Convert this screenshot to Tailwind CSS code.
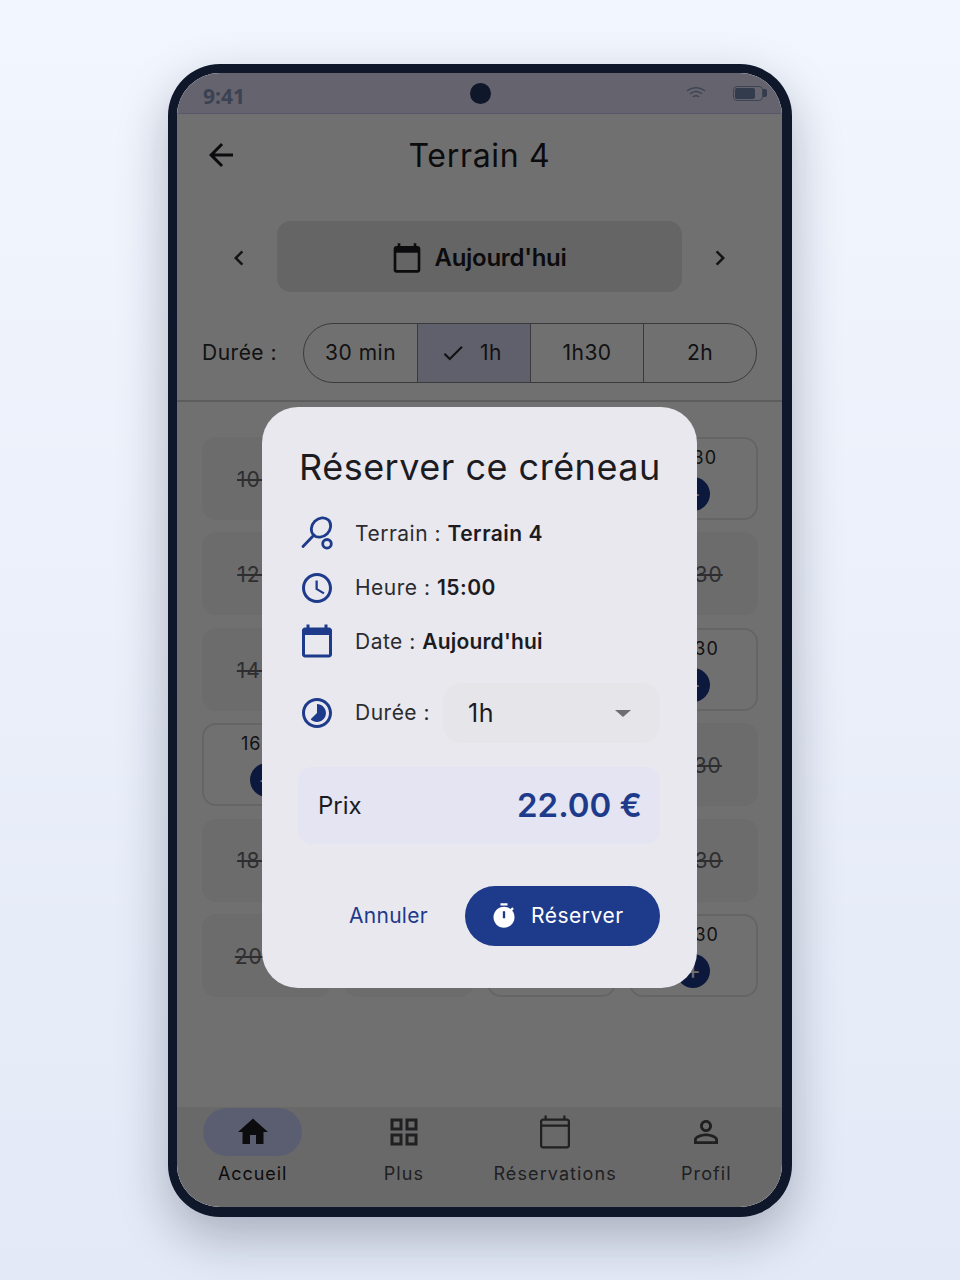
<!DOCTYPE html>
<html lang="fr">
<head>
  <meta charset="UTF-8" />
  <title>Terrain 4</title>
  <script src="https://cdn.jsdelivr.net/npm/@tailwindcss/browser@4"></script>
</head>
<body class="h-[1280px] overflow-hidden bg-gradient-to-b from-[#f2f6fe] to-[#e3e9f6] font-['Inter',sans-serif] text-[#1c1b1f]">

  <div class="pt-[64px]">
    <!-- Phone frame -->
    <div class="relative mx-auto w-[624px] h-[1153px] rounded-[52px] border-[9px] border-r-[10px] border-b-[10px] border-[#0f172a] bg-white overflow-hidden shadow-[0_20px_50px_rgba(15,23,42,0.28)]">
      <div class="flex h-full flex-col">

        <!-- Status bar -->
        <div class="flex h-[41px] shrink-0 items-center justify-between border-b border-[#c8c4f2] bg-[#e6e4fa] pl-[26px] pr-[15px]">
          <span class="pt-[7px] font-['Noto_Sans',sans-serif] text-[21px] font-bold text-[#8496bd]">9:41</span>
          <div class="flex items-center gap-[27px]">
            <svg class="w-[20px] h-[14px] text-[#8a9cc0]" viewBox="0 0 20 14" fill="none" stroke="currentColor" stroke-width="1.5"><path d="M1 5C6 0.500 14 0.500 19 5" /><path d="M4 8C7.500 4.800 12.500 4.800 16 8" /><path d="M7 11C9 9.300 11 9.300 13 11" /></svg>
            <div class="flex items-center">
              <div class="flex h-[15px] w-[30px] items-center rounded-[4px] border-[1.5px] border-[#8a9cc0] p-[1px]"><div class="h-full w-[20px] rounded-[2px] bg-[#7488ae]"></div></div>
              <div class="h-[8px] w-[4px] rounded-r-[2px] bg-[#7488ae]"></div>
            </div>
          </div>
        </div>

        <!-- Header -->
        <div class="relative flex h-[84px] shrink-0 items-center justify-center">
          <svg class="absolute left-[26px] top-[23px] w-[36px] h-[36px]" viewBox="0 0 24 24" fill="currentColor"><path d="M20 11H7.830l5.590-5.590L12 4l-8 8 8 8 1.410-1.410L7.830 13H20v-2z" /></svg>
          <h1 class="text-[32px] font-normal tracking-[0.7px]">Terrain 4</h1>
        </div>

        <!-- Date selector -->
        <div class="relative flex h-[94px] shrink-0 items-center pb-[1px] pl-[100px] pr-[100px] pt-[23px]">
          <svg class="absolute left-[47px] top-[45px] w-[30px] h-[30px] text-[#2e2e30]" viewBox="0 0 24 24" fill="currentColor"><path d="M15.410 7.410L14 6l-6 6 6 6 1.410-1.410L10.830 12z" /></svg>
          <div class="flex h-[71px] w-full items-center justify-center gap-[12px] rounded-[14px] bg-[#e5e5e7] pr-[2px] pt-[3px]">
            <svg class="w-[32px] h-[32px]" viewBox="0 0 24 24" fill="currentColor"><path d="M20 3h-1V1h-2v2H7V1H5v2H4c-1.100 0-2 .9-2 2v16c0 1.100.9 2 2 2h16c1.100 0 2-.9 2-2V5c0-1.100-.9-2-2-2zm0 18H4V8h16v13z" /></svg>
            <span class="text-[24px] font-semibold tracking-[-0.3px]">Aujourd'hui</span>
          </div>
          <svg class="absolute right-[47px] top-[45px] w-[30px] h-[30px] text-[#2e2e30]" viewBox="0 0 24 24" fill="currentColor"><path d="M10 6L8.590 7.410 13.170 12l-4.580 4.590L10 18l6-6z" /></svg>
        </div>

        <!-- Duration selector -->
        <div class="flex h-[110px] shrink-0 items-center gap-[26px] border-b-2 border-[#d3d3d7] px-[25px] pb-[19px] pt-[32px]">
          <span class="pt-[1px] text-[21px] tracking-[0.5px] text-[#2a2a2c]">Durée :</span>
          <div class="grid h-[60px] w-[454px] grid-cols-4 rounded-full border-[1.5px] border-[#85858a] text-[21px] tracking-[0.5px] text-[#2a2a2c]">
            <div class="flex items-center justify-center pt-[1px]">30 min</div>
            <div class="flex items-center justify-center gap-[14px] border-l-[1.5px] border-[#85858a] bg-[#dbdbf9] pr-[6px] pt-[1px]">
              <svg class="w-[26px] h-[26px]" viewBox="0 0 24 24" fill="currentColor"><path d="M9 16.170L4.830 12l-1.420 1.410L9 19 21 7l-1.410-1.410z" /></svg>
              <span>1h</span>
            </div>
            <div class="flex items-center justify-center border-l-[1.5px] border-[#85858a] pt-[1px]">1h30</div>
            <div class="flex items-center justify-center border-l-[1.5px] border-[#85858a] pt-[1px]">2h</div>
          </div>
        </div>

        <!-- Slots -->
        <div class="grid flex-1 grid-cols-4 content-start gap-x-[13px] gap-y-[12.4px] pl-[25px] pr-[24px] pt-[35px] text-[21px] tracking-[1px]">
          <div class="flex h-[83px] items-center justify-center rounded-[14px] bg-[#f5f5f7] pt-[2px] text-[#6a6a6e] line-through">10:00</div>
          <div class="flex h-[83px] items-center justify-center rounded-[14px] bg-[#f5f5f7] pt-[2px] text-[#6a6a6e] line-through">10:30</div>
          <div class="flex h-[83px] items-center justify-center rounded-[14px] bg-[#f5f5f7] pt-[2px] text-[#6a6a6e] line-through">11:00</div>
          <div class="flex h-[83px] flex-col items-center rounded-[14px] border-2 border-[#e6e6ea] pt-[5px] text-[18px] text-[#2a2a2c]">11:30<span class="mt-[6px] flex h-[34px] w-[34px] items-center justify-center rounded-full bg-[#1e3a8a] text-[24px] leading-none text-white">+</span></div>
          <div class="flex h-[83px] items-center justify-center rounded-[14px] bg-[#f5f5f7] pt-[2px] text-[#6a6a6e] line-through">12:00</div>
          <div class="flex h-[83px] items-center justify-center rounded-[14px] bg-[#f5f5f7] pt-[2px] text-[#6a6a6e] line-through">12:30</div>
          <div class="flex h-[83px] items-center justify-center rounded-[14px] bg-[#f5f5f7] pt-[2px] text-[#6a6a6e] line-through">13:00</div>
          <div class="flex h-[83px] items-center justify-center rounded-[14px] bg-[#f5f5f7] pt-[2px] text-[#6a6a6e] line-through">13:30</div>
          <div class="flex h-[83px] items-center justify-center rounded-[14px] bg-[#f5f5f7] pt-[2px] text-[#6a6a6e] line-through">14:00</div>
          <div class="flex h-[83px] items-center justify-center rounded-[14px] bg-[#f5f5f7] pt-[2px] text-[#6a6a6e] line-through">14:30</div>
          <div class="flex h-[83px] items-center justify-center rounded-[14px] bg-[#f5f5f7] pt-[2px] text-[#6a6a6e] line-through">15:00</div>
          <div class="flex h-[83px] flex-col items-center rounded-[14px] border-2 border-[#e6e6ea] pt-[5px] text-[18px] text-[#2a2a2c]">15:30<span class="mt-[6px] flex h-[34px] w-[34px] items-center justify-center rounded-full bg-[#1e3a8a] text-[24px] leading-none text-white">+</span></div>
          <div class="flex h-[83px] flex-col items-center rounded-[14px] border-2 border-[#e6e6ea] pt-[5px] text-[18px] text-[#2a2a2c]">16:00<span class="mt-[6px] flex h-[34px] w-[34px] items-center justify-center rounded-full bg-[#1e3a8a] text-[24px] leading-none text-white">+</span></div>
          <div class="flex h-[83px] items-center justify-center rounded-[14px] bg-[#f5f5f7] pt-[2px] text-[#6a6a6e] line-through">16:30</div>
          <div class="flex h-[83px] items-center justify-center rounded-[14px] bg-[#f5f5f7] pt-[2px] text-[#6a6a6e] line-through">17:00</div>
          <div class="flex h-[83px] items-center justify-center rounded-[14px] bg-[#f5f5f7] pt-[2px] text-[#6a6a6e] line-through">17:30</div>
          <div class="flex h-[83px] items-center justify-center rounded-[14px] bg-[#f5f5f7] pt-[2px] text-[#6a6a6e] line-through">18:00</div>
          <div class="flex h-[83px] items-center justify-center rounded-[14px] bg-[#f5f5f7] pt-[2px] text-[#6a6a6e] line-through">18:30</div>
          <div class="flex h-[83px] items-center justify-center rounded-[14px] bg-[#f5f5f7] pt-[2px] text-[#6a6a6e] line-through">19:00</div>
          <div class="flex h-[83px] items-center justify-center rounded-[14px] bg-[#f5f5f7] pt-[2px] text-[#6a6a6e] line-through">19:30</div>
          <div class="flex h-[83px] items-center justify-center rounded-[14px] bg-[#f5f5f7] pt-[2px] text-[#6a6a6e] line-through">20:00</div>
          <div class="flex h-[83px] items-center justify-center rounded-[14px] bg-[#f5f5f7] pt-[2px] text-[#6a6a6e] line-through">20:30</div>
          <div class="flex h-[83px] flex-col items-center rounded-[14px] border-2 border-[#e6e6ea] pt-[5px] text-[18px] text-[#2a2a2c]">21:00<span class="mt-[6px] flex h-[34px] w-[34px] items-center justify-center rounded-full bg-[#1e3a8a] text-[24px] leading-none text-white">+</span></div>
          <div class="flex h-[83px] flex-col items-center rounded-[14px] border-2 border-[#e6e6ea] pt-[5px] text-[18px] text-[#2a2a2c]">21:30<span class="mt-[6px] flex h-[34px] w-[34px] items-center justify-center rounded-full bg-[#1e3a8a] text-[24px] leading-none text-white">+</span></div>
        </div>

        <!-- Bottom nav -->
        <nav class="grid h-[100px] shrink-0 grid-cols-4 bg-[#eeeeef] pt-[1px] text-[18px] tracking-[1.1px] text-[#4a4a4e]">
          <div class="flex flex-col items-center">
            <div class="flex h-[48px] w-[99px] items-center justify-center rounded-full bg-[#d0d7ff]">
              <svg class="w-[36px] h-[36px] text-[#1c1b1f]" viewBox="0 0 24 24" fill="currentColor"><path d="M10 20v-6h4v6h5v-8h3L12 3 2 12h3v8z" /></svg>
            </div>
            <span class="mt-[4px] tracking-[0.9px] text-[#1c1b1f]">Accueil</span>
          </div>
          <div class="flex flex-col items-center">
            <div class="flex h-[48px] items-center justify-center"><svg class="w-[36px] h-[36px]" viewBox="0 0 24 24" fill="currentColor"><path d="M3 3v8h8V3H3zm6 6H5V5h4v4zm-6 4v8h8v-8H3zm6 6H5v-4h4v4zm4-16v8h8V3h-8zm6 6h-4V5h4v4zm-6 4v8h8v-8h-8zm6 6h-4v-4h4v4z" /></svg></div>
            <span class="mt-[4px]">Plus</span>
          </div>
          <div class="flex flex-col items-center">
            <div class="flex h-[48px] items-center justify-center"><svg class="w-[36px] h-[36px]" viewBox="0 0 24 24" fill="currentColor"><path d="M20 3h-1V1h-1.500v2h-11V1H5v2H4c-1.100 0-2 .9-2 2v16c0 1.100.9 2 2 2h16c1.100 0 2-.9 2-2V5c0-1.100-.9-2-2-2zm.5 18c0 .3-.2.5-.5.5H4c-.3 0-.5-.2-.5-.5V8.500h17V21zm0-14h-17V5c0-.3.2-.5.5-.5h16c.3 0 .5.2.5.5v2z" /></svg></div>
            <span class="mt-[4px]">Réservations</span>
          </div>
          <div class="flex flex-col items-center">
            <div class="flex h-[48px] items-center justify-center"><svg class="w-[36px] h-[36px]" viewBox="0 0 24 24" fill="currentColor"><path d="M12 5.900c1.160 0 2.100.94 2.100 2.100s-.94 2.100-2.100 2.100S9.900 9.160 9.900 8s.94-2.100 2.100-2.100m0 9c2.970 0 6.100 1.460 6.100 2.100v1.100H5.900V17c0-.64 3.130-2.100 6.100-2.100M12 4C9.790 4 8 5.790 8 8s1.790 4 4 4 4-1.790 4-4-1.790-4-4-4zm0 9c-2.670 0-8 1.340-8 4v3h16v-3c0-2.660-5.330-4-8-4z" /></svg></div>
            <span class="mt-[4px]">Profil</span>
          </div>
        </nav>
      </div>

      <!-- Dialog overlay -->
      <div class="absolute inset-0 bg-black/[0.56]">
        <div class="absolute left-[85px] top-[334px] flex h-[581px] w-[435px] flex-col rounded-[36px] bg-[#e9e8ef] px-[37px] pt-[36px]">
          <h2 class="whitespace-nowrap text-[36px] font-normal leading-[48px] tracking-[0.5px] text-[#1c1b1f]">Réserver ce créneau</h2>

          <div class="mt-[16px] flex h-[54px] items-center gap-[20px] text-[21px] tracking-[0.5px] text-[#2c2c30]">
            <svg class="w-[36px] h-[36px] text-[#1e3a8a]" viewBox="0 0 36 36" fill="none" stroke="currentColor" stroke-width="2.800"><ellipse cx="22" cy="11.500" rx="10.500" ry="8.800" transform="rotate(-45 22 11.500)" /><path d="M15 19L4 30.500" stroke-linecap="round" /><circle cx="28" cy="27.800" r="4.300" /></svg>
            <span>Terrain : <b class="font-semibold text-[#1c1b1f]">Terrain 4</b></span>
          </div>
          <div class="flex h-[54px] items-center gap-[20px] text-[21px] tracking-[0.5px] text-[#2c2c30]">
            <svg class="w-[36px] h-[36px] text-[#1e3a8a]" viewBox="0 0 24 24" fill="currentColor"><path d="M11.990 2C6.470 2 2 6.480 2 12s4.470 10 9.990 10C17.520 22 22 17.520 22 12S17.520 2 11.990 2zM12 20c-4.420 0-8-3.580-8-8s3.580-8 8-8 8 3.580 8 8-3.580 8-8 8zm.5-13H11v6l5.250 3.150.75-1.230-4.500-2.670z" /></svg>
            <span>Heure : <b class="font-semibold text-[#1c1b1f]">15:00</b></span>
          </div>
          <div class="flex h-[54px] items-center gap-[20px] text-[21px] tracking-[0.5px] text-[#2c2c30]">
            <svg class="w-[36px] h-[36px] -translate-y-[1px] text-[#1e3a8a]" viewBox="0 0 24 24" fill="currentColor"><path d="M20 3h-1V1h-2v2H7V1H5v2H4c-1.100 0-2 .9-2 2v16c0 1.100.9 2 2 2h16c1.100 0 2-.9 2-2V5c0-1.100-.9-2-2-2zm0 18H4V8h16v13z" /></svg>
            <span>Date : <b class="font-semibold tracking-[0.2px] text-[#1c1b1f]">Aujourd'hui</b></span>
          </div>

          <div class="mt-[14px] flex h-[60px] items-center gap-[20px] text-[21px] tracking-[0.5px] text-[#2c2c30]">
            <svg class="w-[36px] h-[36px] text-[#1e3a8a]" viewBox="0 0 24 24" fill="currentColor"><path d="M16.240 7.760C15.070 6.590 13.540 6 12 6v6l-4.240 4.240c2.340 2.340 6.140 2.340 8.490 0 2.340-2.340 2.340-6.140-.01-8.480zM12 2C6.480 2 2 6.480 2 12s4.480 10 10 10 10-4.480 10-10S17.520 2 12 2zm0 18c-4.420 0-8-3.580-8-8s3.580-8 8-8 8 3.580 8 8-3.580 8-8 8z" /></svg>
            <span>Durée :</span>
            <div class="ml-[-7px] flex h-[60px] flex-1 items-center justify-between rounded-[18px] bg-[#e6e6ea] pl-[25px] pr-[29px]">
              <span class="pt-[1px] text-[25px] text-[#1c1b1f]">1h</span>
              <span class="h-0 w-0 border-x-[8px] border-t-[7px] border-x-transparent border-t-[#6e6e72]"></span>
            </div>
          </div>

          <div class="-ml-[1px] mt-[24px] flex h-[77px] items-center justify-between rounded-[14px] bg-[#e4e4f2] pl-[20px] pr-[18px]">
            <span class="text-[24px] text-[#1c1b1f]">Prix</span>
            <span class="text-[33px] font-semibold text-[#1e3a8a]">22.00 €</span>
          </div>

          <div class="mt-[42px] flex items-center justify-end gap-[37px]">
            <span class="text-[21px] tracking-[0.3px] text-[#1e3a8a]">Annuler</span>
            <div class="flex h-[60px] w-[195px] items-center gap-[13px] rounded-full bg-[#1e3a8a] pl-[25px] text-[21px] tracking-[0.5px] text-white">
              <svg class="w-[28px] h-[28px]" viewBox="0 0 24 24" fill="currentColor"><path d="M9 1h6v2H9zm10.030 6.390 1.420-1.420c-.43-.51-.9-.99-1.410-1.410l-1.420 1.420C16.070 4.740 14.120 4 12 4c-4.970 0-9 4.030-9 9s4.020 9 9 9 9-4.030 9-9c0-2.120-.74-4.070-1.970-5.610zM13 14h-2V8h2v6z" /></svg>
              <span>Réserver</span>
            </div>
          </div>
        </div>
      </div>

      <!-- Camera -->
      <div class="absolute left-[293px] top-[10px] h-[21px] w-[21px] rounded-full bg-[#0f172a]"></div>
    </div>
  </div>
</body>
</html>
